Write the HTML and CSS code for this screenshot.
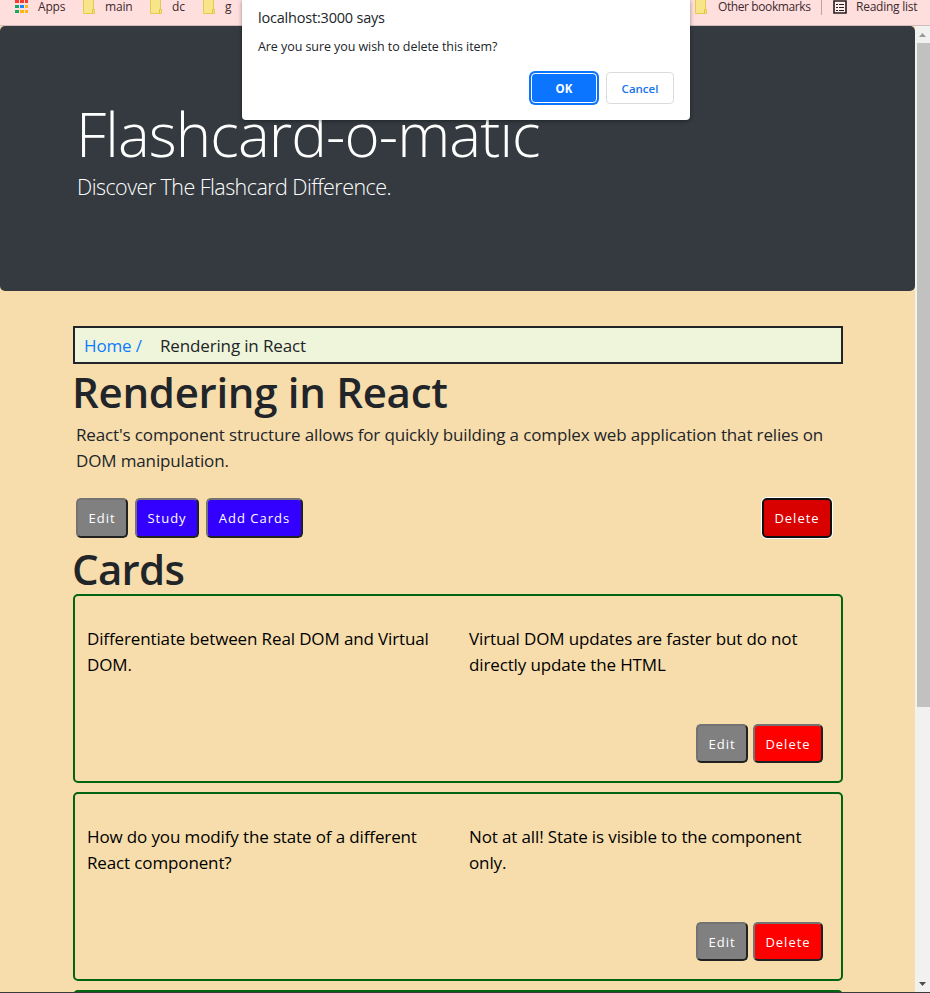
FILE: index.html
```html
<!DOCTYPE html>
<html lang="en">
<head>
<meta charset="utf-8">
<title>Flashcard-o-matic</title>
<link rel="stylesheet" href="styles.css">
</head>
<body>
<div class="window">
  <div class="bookmarks">
    <svg class="apps" width="14" height="14" viewBox="0 0 14 14"><path fill="#f43d2c" d="M0 0h4v3H0zM5 0h4v3H5zM10 0h3v3h-3z"/><path fill="#16a765" d="M0 5h4v3H0zM0 10h4v3H0z"/><path fill="#1a86fb" d="M5 5h4v3H5z"/><path fill="#fbb70b" d="M10 5h3v3h-3zM5 10h4v3H5zM10 10h3v3h-3z"/></svg>
    <span class="bm bm-apps">Apps</span>
    <svg class="folder" width="13" height="14" viewBox="0 0 13 14"><path d="M.5-.5h10v10h1v4H.5z" fill="#f8e58a" stroke="#e5cb4d"/><path d="M9.500 13V9.500h1.500" fill="none" stroke="#dfc33f"/></svg>
    <span class="bm bm-main">main</span>
    <svg class="folder" width="13" height="14" viewBox="0 0 13 14"><path d="M.5-.5h10v10h1v4H.5z" fill="#f8e58a" stroke="#e5cb4d"/><path d="M9.500 13V9.500h1.500" fill="none" stroke="#dfc33f"/></svg>
    <span class="bm bm-dc">dc</span>
    <svg class="folder" width="13" height="14" viewBox="0 0 13 14"><path d="M.5-.5h10v10h1v4H.5z" fill="#f8e58a" stroke="#e5cb4d"/><path d="M9.500 13V9.500h1.500" fill="none" stroke="#dfc33f"/></svg>
    <span class="bm bm-g">g</span>
    <svg class="folder other" width="13" height="14" viewBox="0 0 13 14"><path d="M.5-.5h10v10h1v4H.5z" fill="#f8e58a" stroke="#e5cb4d"/><path d="M9.500 13V9.500h1.500" fill="none" stroke="#dfc33f"/></svg>
    <span class="bm bm-other">Other bookmarks</span>
    <span class="divider"></span>
    <svg class="reading" width="14" height="14" viewBox="0 0 14 14"><path d="M1 1h12v12H1z" fill="#ffeeee" stroke="#2a1c1e" stroke-width="1.600"/><path d="M3 4.500h2M6 4.500h5M3 7.500h2M6 7.500h5M3 10.500h2M6 10.500h5" stroke="#2a1c1e" stroke-width="1"/></svg>
    <span class="bm bm-reading">Reading list</span>
  </div>
  <div class="viewport">
    <div class="page">
      <header class="hero">
        <h1 class="brand">Flashcard-o-matic</h1>
        <p class="tagline">Discover The Flashcard Difference.</p>
      </header>
      <main class="content">
        <nav class="crumbs"><a class="home">Home /</a><span class="current">Rendering in React</span></nav>
        <h2 class="title deck">Rendering in React</h2>
        <p class="desc">React's component structure allows for quickly building a complex web application that relies on<br>DOM manipulation.</p>
        <div class="actions">
          <button class="btn gray edit">Edit</button>
          <button class="btn blue study">Study</button>
          <button class="btn blue add">Add Cards</button>
          <button class="btn del focused">Delete</button>
        </div>
        <h2 class="title cards">Cards</h2>
        <section class="card">
          <div class="sides">
            <p>Differentiate between Real DOM and Virtual<br>DOM.</p>
            <p>Virtual DOM updates are faster but do not<br>directly update the HTML</p>
          </div>
          <div class="card-actions">
            <button class="btn gray edit">Edit</button>
            <button class="btn del">Delete</button>
          </div>
        </section>
        <section class="card">
          <div class="sides">
            <p>How do you modify the state of a different<br>React component?</p>
            <p>Not at all! State is visible to the component<br>only.</p>
          </div>
          <div class="card-actions">
            <button class="btn gray edit">Edit</button>
            <button class="btn del">Delete</button>
          </div>
        </section>
        <section class="card"></section>
      </main>
    </div>
    <div class="scrollbar">
      <svg width="15" height="17" viewBox="0 0 15 17"><path d="M4 11h7L7.500 7z" fill="#9a9a9a"/></svg>
      <div class="thumb"></div>
      <svg class="down" width="15" height="17" viewBox="0 0 15 17"><path d="M4 7h7L7.500 11z" fill="#4d4d4d"/></svg>
    </div>
  </div>
  <div class="dialog">
    <div class="host">localhost:3000 says</div>
    <div class="message">Are you sure you wish to delete this item?</div>
    <div class="dialog-actions">
      <button class="ok">OK</button>
      <button class="cancel">Cancel</button>
    </div>
  </div>
</div>
</body>
</html>
```
FILE: styles.css
```css
* { box-sizing: border-box; }
body { margin: 0; font-family: "Open Sans", "Noto Sans", sans-serif; color: #212529; }
h1, h2, p { margin: 0; }
button { margin: 0; padding: 0; font-family: inherit; white-space: nowrap; }
.window { position: relative; width: 930px; height: 993px; overflow: hidden; display: flex; flex-direction: column; border-bottom: 1px solid #3a3a38; }
.bookmarks { height: 26px; flex: none; display: flex; align-items: flex-start; background: #ffdede; border-bottom: 1px solid #d5bbbb; padding-left: 15px; }
.bookmarks svg { flex: none; }
.bm { font-size: 12px; line-height: 16px; margin-top: -1px; color: #3c2b2d; white-space: nowrap; flex: none; letter-spacing: -.2px; }
.bm-apps { width: 45px; margin-left: 9px; }
.bm-main { width: 45px; margin-left: 9px; }
.bm-dc { width: 31px; margin-left: 9px; }
.bm-g { width: 10px; margin-left: 9px; }
.other { margin-left: auto; }
.bm-other { width: 103px; margin-left: 10px; letter-spacing: -.4px; }
.divider { width: 1px; height: 15px; background: #bda3a4; flex: none; }
.reading { margin-left: 11px; }
.bm-reading { width: 74px; margin-left: 9px; letter-spacing: -.25px; }
.viewport { flex: 1; min-height: 0; display: flex; background: #f7ddac; }
.page { width: 915px; overflow: hidden; }
.hero { height: 265px; padding: 70px 77px 0; background: #343a40; border-radius: 5px; color: #fff; }
.brand { font-size: 60px; font-weight: 300; line-height: 76px; letter-spacing: -.9px; margin-left: -1px; white-space: nowrap; }
.tagline { font-size: 21.500px; font-weight: 300; line-height: 29px; letter-spacing: -.55px; }
.content { width: 770px; margin: 35px 0 0 73px; }
.crumbs { height: 38px; border: 2px solid #212529; background: #eff5da; display: flex; align-items: center; padding-left: 9px; font-size: 17px; letter-spacing: -.15px; white-space: nowrap; }
.home { color: #0d7bff; width: 76px; }
.title { font-size: 42px; font-weight: 600; line-height: 56px; letter-spacing: -.3px; margin-left: -1px; white-space: nowrap; }
.desc { padding-left: 3px; margin-top: 2px; font-size: 17px; line-height: 26px; letter-spacing: -.14px; white-space: nowrap; }
.actions { display: flex; margin: 24px 11px 0 3px; }
.btn { height: 39px; border: 2px solid; border-color: #737373 #212121 #212121 #737373; border-radius: 5px; color: #fff; font-size: 13px; letter-spacing: 1px; }
.gray { background: #808080; }
.blue { background: #3300ff; }
.del { background: #f00; width: 70px; }
.edit { width: 52px; }
.study { width: 64px; margin-left: 7px; }
.add { width: 97px; margin-left: 7px; }
.actions .btn { height: 40px; }
.actions .focused { margin-left: auto; background: #d90000; border-color: #101010; box-shadow: 0 0 0 1px #fff; }
.title.cards { margin-top: 3px; height: 53px; letter-spacing: -.7px; }
.card { height: 189px; border: 2px solid #006413; border-radius: 5px; margin-bottom: 9px; padding: 30px 18px 18px 12px; display: flex; flex-direction: column; justify-content: space-between; color: #000; }
.sides { display: grid; grid-template-columns: 382px 356px; font-size: 17px; letter-spacing: -.13px; line-height: 26px; white-space: nowrap; }
.card-actions { display: flex; justify-content: flex-end; gap: 5px; }
.scrollbar { width: 15px; display: flex; flex-direction: column; background: #f1f1f0; align-items: flex-end; }
.thumb { width: 13px; height: 664px; background: #c1c1c0; }
.down { margin-top: auto; }
.dialog { position: absolute; left: 242px; top: 0; width: 448px; height: 120px; background: #fff; border-radius: 0 0 4px 4px; padding: 7px 16px 0; box-shadow: 0 1px 4px rgba(0,0,0,.4); }
.host { font-size: 14.500px; line-height: 22px; letter-spacing: -.2px; }
.message { font-size: 12.500px; line-height: 18px; margin-top: 9px; letter-spacing: -.07px; }
.dialog-actions { display: flex; justify-content: flex-end; gap: 8px; margin-top: 16px; }
.dialog-actions button { height: 32px; border-radius: 4px; font-size: 11.500px; font-weight: 600; width: 68px; }
.dialog-actions .ok { background: #0b75ff; color: #fff; border: 1px solid #fff; box-shadow: 0 0 0 2px #0b75ff; height: 30px; width: 66px; margin: 1px; font-weight: 700; }
.cancel { background: #fff; color: #1a73e8; border: 1px solid #dadce0; }
```
